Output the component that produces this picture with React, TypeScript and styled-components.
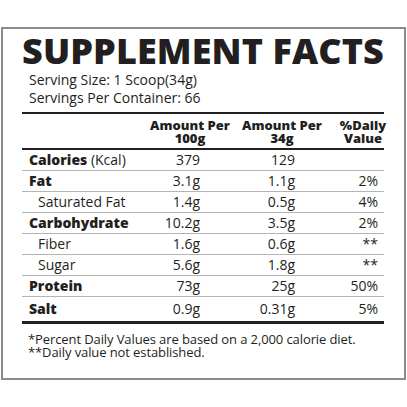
import React from 'react'
import styled, { createGlobalStyle } from 'styled-components'

type Nutrient = {
  label: string
  note?: string
  per100: string
  perServing: string
  daily: string
  bold?: boolean
}

const nutrients: Nutrient[] = [
  { label: 'Calories', note: ' (Kcal)', per100: '379', perServing: '129', daily: '', bold: true },
  { label: 'Fat', per100: '3.1g', perServing: '1.1g', daily: '2%', bold: true },
  { label: 'Saturated Fat', per100: '1.4g', perServing: '0.5g', daily: '4%' },
  { label: 'Carbohydrate', per100: '10.2g', perServing: '3.5g', daily: '2%', bold: true },
  { label: 'Fiber', per100: '1.6g', perServing: '0.6g', daily: '**' },
  { label: 'Sugar', per100: '5.6g', perServing: '1.8g', daily: '**' },
  { label: 'Protein', per100: '73g', perServing: '25g', daily: '50%', bold: true },
  { label: 'Salt', per100: '0.9g', perServing: '0.31g', daily: '5%', bold: true },
]

const GlobalStyle = createGlobalStyle`
  body {
    margin: 0;
    background: #fff;
    color: #231f20;
    font-family: 'Open Sans', 'Noto Sans', sans-serif;
  }
`

const Label = styled.div`
  margin: 27px 1px 0;
  border: 2px solid #8c8c8c;
  padding: 2px 20px 12px 19px;
  height: 353px;
  box-sizing: border-box;
`

const Title = styled.h1`
  margin: 0;
  font-size: 36px;
  line-height: 40px;
  font-weight: 800;
  letter-spacing: 0.1px;
  white-space: nowrap;
`

const Serving = styled.div`
  padding-left: 7px;
  font-size: 14px;
  line-height: 18px;
`

const Table = styled.div`
  margin-top: 5px;
  border-top: 2px solid #231f20;
  border-bottom: 3px solid #231f20;
`

const Row = styled.div<{ $head?: boolean }>`
  display: grid;
  grid-template-columns: 118px 100px 102px 42px;
  align-items: center;
  height: ${({ $head }) => ($head ? '36px' : '21px')};
  box-sizing: border-box;
  border-bottom: ${({ $head }) => ($head ? '2px solid #231f20' : '1px solid #b4b4b4')};
  &:last-child {
    border-bottom: none;
    height: 24px;
  }
`

const HeadCell = styled.div<{ $shift?: number }>`
  display: flex;
  justify-content: center;
  text-align: center;
  font-size: 13px;
  line-height: 13px;
  font-weight: 800;
  white-space: nowrap;
  padding-top: 1px;
  padding-right: ${({ $shift }) => $shift ?? 0}px;
`

const Name = styled.div<{ $bold?: boolean }>`
  font-size: 14px;
  line-height: 20px;
  font-weight: ${({ $bold }) => ($bold ? 800 : 400)};
  padding-left: ${({ $bold }) => ($bold ? 7 : 16)}px;
  white-space: nowrap;
  & span {
    font-weight: 400;
  }
`

const Value = styled.div<{ $pad: number }>`
  font-size: 14px;
  line-height: 20px;
  text-align: right;
  padding-right: ${({ $pad }) => $pad}px;
  white-space: nowrap;
`

const Footnote = styled.p`
  margin: 9px 0 0 6px;
  font-size: 13px;
  line-height: 13px;
  letter-spacing: -0.1px;
  white-space: nowrap;
`

const App = () => {
  return (
    <>
      <GlobalStyle />
      <Label>
        <Title>SUPPLEMENT FACTS</Title>
        <Serving>Serving Size: 1 Scoop(34g)</Serving>
        <Serving>Servings Per Container: 66</Serving>
        <Table>
          <Row $head>
            <div />
            <HeadCell>
              Amount Per
              <br />
              100g
            </HeadCell>
            <HeadCell $shift={18}>
              Amount Per
              <br />
              34g
            </HeadCell>
            <HeadCell>
              %Daily
              <br />
              Value
            </HeadCell>
          </Row>
          {nutrients.map((n) => (
            <Row key={n.label}>
              <Name $bold={n.bold}>
                {n.label}
                {n.note && <span>{n.note}</span>}
              </Name>
              <Value $pad={40}>{n.per100}</Value>
              <Value $pad={47}>{n.perServing}</Value>
              <Value $pad={6}>{n.daily}</Value>
            </Row>
          ))}
        </Table>
        <Footnote>
          *Percent Daily Values are based on a 2,000 calorie diet.
          <br />
          **Daily value not established.
        </Footnote>
      </Label>
    </>
  )
}

export default App
